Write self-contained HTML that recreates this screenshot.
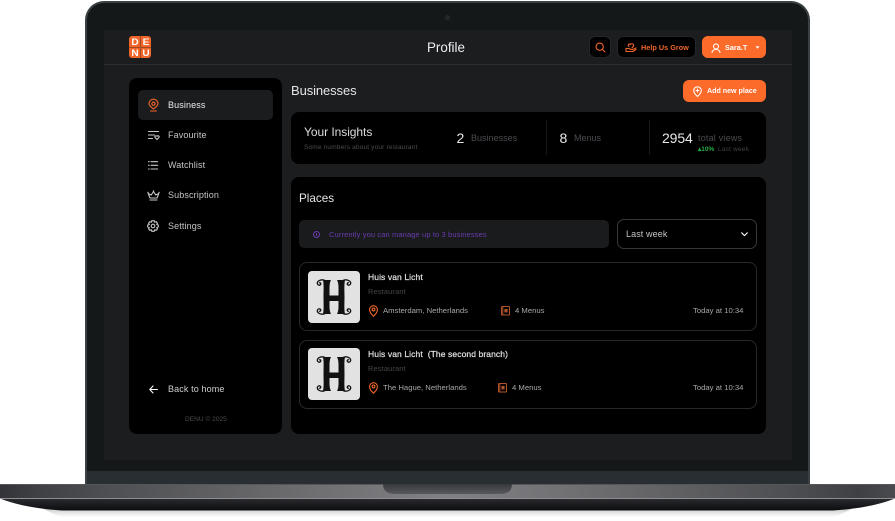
<!DOCTYPE html>
<html><head><meta charset="utf-8"><style>
*{box-sizing:border-box;margin:0;padding:0}
html,body{width:895px;height:521px;background:#fff;overflow:hidden}
body{position:relative;font-family:"Liberation Sans",sans-serif}
.a{position:absolute}
.t{position:absolute;white-space:nowrap;line-height:1}
svg{position:absolute;overflow:visible}
.nav{font-size:9px;color:#c4c4c4;letter-spacing:.12px}
.i{fill:none;stroke:#c8c8c8;stroke-width:1.1;stroke-linecap:round;stroke-linejoin:round}
.o{fill:none;stroke:#f0662a;stroke-width:1.1;stroke-linecap:round;stroke-linejoin:round}
.w{fill:none;stroke:#fff;stroke-width:1.1;stroke-linecap:round;stroke-linejoin:round}
.card{background:#000;border-radius:8px}
.row{left:299px;width:458px;height:69px;border:1px solid #26292c;border-radius:8px}
.thumb{left:308px;width:52px;height:52px;background:#e2e2e2;border-radius:4px}
.lg{position:absolute;font-size:9px;font-weight:700;color:#fff;line-height:1;width:10px;text-align:center;transform:scaleX(1.12)}
.sm{font-size:7.7px;color:#a8a8a8}
</style></head><body>
<!-- laptop lid -->
<div class="a" style="left:85px;top:1px;width:725px;height:484px;background:#3a4043;border-radius:19px 19px 0 0"></div>
<div class="a" style="left:87px;top:3px;width:721px;height:482px;background:#151819;border-radius:17px 17px 0 0"></div>
<div class="a" style="left:445px;top:15px;width:5px;height:5px;border-radius:50%;background:#23282b"></div>
<div class="a" style="left:87px;top:471px;width:721px;height:14px;background:#282e31"></div>
<!-- screen -->
<div class="a" style="left:104px;top:30px;width:688px;height:430px;background:#1c1d1f"></div>
<div class="a" style="left:104px;top:64px;width:688px;height:1px;background:#2b2f31"></div>
<!-- base -->
<div class="a" style="left:0;top:505px;width:895px;height:12px;background:linear-gradient(#b5b5b5,#fff);clip-path:polygon(35px 0,860px 0,835px 100%,60px 100%);filter:blur(1px)"></div>
<svg style="left:0;top:484px" width="895" height="27" viewBox="0 0 895 27">
<defs><linearGradient id="b" x1="0" x2="1" y1="0" y2="0">
<stop offset="0" stop-color="#333437"/><stop offset=".04" stop-color="#3f4043"/><stop offset=".12" stop-color="#4e4f52"/><stop offset=".3" stop-color="#68686b"/><stop offset=".5" stop-color="#818185"/><stop offset=".7" stop-color="#68686b"/><stop offset=".88" stop-color="#4e4f52"/><stop offset=".96" stop-color="#3f4043"/><stop offset="1" stop-color="#4a4b4e"/></linearGradient>
<linearGradient id="d" x1="0" x2="0" y1="0" y2="1"><stop offset="0" stop-color="#2a2b2f"/><stop offset="1" stop-color="#0c0d0f"/></linearGradient>
<linearGradient id="n" x1="0" x2="0" y1="0" y2="1"><stop offset="0" stop-color="#38393c"/><stop offset="1" stop-color="#58595c"/></linearGradient></defs>
<path d="M0 14.5Q24 24 62 26.5H833Q871 24 895 14.5Z" fill="url(#d)"/>
<rect x="0" y="0" width="895" height="14" fill="url(#b)"/>
<rect x="0" y="0" width="895" height="1" fill="#55575a"/>
<rect x="0" y="14" width="895" height="1" fill="#8a8a8e" opacity=".6"/>
<path d="M383 0H512Q512 10 500 10H395Q383 10 383 0Z" fill="url(#n)"/>
</svg>
<!-- header -->
<div class="a" style="left:129px;top:36px;width:22px;height:22px;background:#f0662a;border-radius:3px"></div>
<div class="a" style="left:129px;top:46.7px;width:22px;height:.6px;background:#a04a22"></div>
<div class="a" style="left:139.7px;top:36px;width:.6px;height:22px;background:#a04a22"></div>
<div class="lg" style="left:130px;top:38px">D</div><div class="lg" style="left:140.5px;top:38px">E</div>
<div class="lg" style="left:130px;top:48.5px">N</div><div class="lg" style="left:140.5px;top:48.5px">U</div>
<div class="t" style="left:427px;top:40.5px;font-size:13.4px;color:#ededed">Profile</div>
<div class="a" style="left:589px;top:36px;width:22px;height:22px;background:#000;border:1px solid #23262a;border-radius:6px"></div>
<svg style="left:595px;top:42px" width="11" height="11"><circle cx="4.7" cy="4.7" r="3.6" class="o"/><path d="M7.5 7.5L10 10" class="o"/></svg>
<div class="a" style="left:617px;top:36px;width:79px;height:22px;background:#000;border:1px solid #23262a;border-radius:6px"></div>
<svg style="left:625px;top:42px" width="12" height="11"><path d="M1 9.5V6.5H4L6 7.5H8L11 6M4 4.5C2.5 3 4 1 5.5 2.5C7 1 9 2 8.5 4L7 6" class="o"/><path d="M1 9.5H8L11 7.5" class="o"/></svg>
<div class="t" style="left:641px;top:43.5px;font-size:7.3px;font-weight:700;color:#f0662a">Help Us Grow</div>
<div class="a" style="left:702px;top:36px;width:64px;height:22px;background:#fd6b2b;border-radius:6px"></div>
<svg style="left:711px;top:42.5px" width="10" height="10"><circle cx="5" cy="3.4" r="2.5" class="w"/><path d="M1 9.5C1.5 5.5 8.5 5.5 9 9.5" class="w"/></svg>
<div class="t" style="left:725px;top:43.5px;font-size:7.3px;font-weight:700;color:#fff">Sara.T</div>
<svg style="left:755px;top:46px" width="5" height="3"><path d="M.5.3H4.5L2.5 2.7Z" fill="#fff"/></svg>
<!-- sidebar -->
<div class="a card" style="left:129px;top:78px;width:153px;height:356px"></div>
<div class="a" style="left:138px;top:90px;width:135px;height:30px;background:#1b1c1e;border-radius:5px"></div>
<svg style="left:148px;top:99px" width="11" height="13"><path d="M5.5 10C3 8 1 6.5 1 4.7A4.5 4.5 0 0 1 10 4.7C10 6.5 8 8 5.5 10Z" class="o"/><circle cx="5.5" cy="4.7" r="1.6" class="o"/><path d="M2.5 12H8.5" class="o"/></svg>
<div class="t nav" style="left:168px;top:101px;color:#ececec">Business</div>
<svg style="left:148px;top:131px" width="12" height="9"><path d="M.5 .5H10.5M.5 4H6.5M.5 7.5H4.5" class="i"/><path d="M9 8.5L7 6.5C6.2 5.2 8 4.2 9 5.3C10 4.2 11.8 5.2 11 6.5Z" class="i"/></svg>
<div class="t nav" style="left:168px;top:131px">Favourite</div>
<svg style="left:148px;top:161px" width="10" height="9"><path d="M.4 .7H1.2M3 .7H9.6M.4 4.3H1.2M3 4.3H9.6M.4 8H1.2M3 8H9.6" class="i"/></svg>
<div class="t nav" style="left:168px;top:161px">Watchlist</div>
<svg style="left:147px;top:190px" width="13" height="11"><path d="M3 8L1.2 3.5L4.3 5L6.5 1.5L8.7 5L11.8 3.5L10 8Z" class="i"/><path d="M3 10H10" class="i"/><circle cx="6.5" cy="1" r=".7" fill="#c8c8c8"/><circle cx="1" cy="2.5" r=".7" fill="#c8c8c8"/><circle cx="12" cy="2.5" r=".7" fill="#c8c8c8"/></svg>
<div class="t nav" style="left:168px;top:191px">Subscription</div>
<svg style="left:147px;top:220px" width="12" height="12"><circle cx="6" cy="6" r="1.8" class="i"/><path d="M4.8.7H7.2L7.6 2.2L9.1 1.6L10.5 3.2L9.6 4.5L11.3 5V7L9.7 7.6L10.5 8.9L9.1 10.4L7.6 9.8L7.2 11.3H4.8L4.4 9.8L2.9 10.4L1.5 8.9L2.3 7.6L.7 7V5L2.4 4.5L1.5 3.2L2.9 1.6L4.4 2.2Z" class="i"/></svg>
<div class="t nav" style="left:168px;top:221.5px">Settings</div>
<svg style="left:149px;top:385px" width="9" height="9"><path d="M8.5 4.5H.8M4 1L.8 4.5L4 8" class="w"/></svg>
<div class="t nav" style="left:168px;top:385px;color:#cfcfcf">Back to home</div>
<div class="t" style="left:185px;top:416.5px;font-size:6.5px;color:#4a4c50;letter-spacing:.05px">DENU © 2025</div>
<!-- top of main -->
<div class="t" style="left:291px;top:84px;font-size:13px;color:#e6e6e6;letter-spacing:-.1px">Businesses</div>
<div class="a" style="left:683px;top:80px;width:83px;height:22px;background:#fd6b2b;border-radius:6px"></div>
<svg style="left:693px;top:85.5px" width="9" height="11"><path d="M4.5 10.5C2.3 8.5.7 6.8.7 4.6A3.8 3.8 0 0 1 8.3 4.6C8.3 6.8 6.7 8.5 4.5 10.5Z" class="w"/><path d="M4.5 3V6M3 4.5H6" class="w"/></svg>
<div class="t" style="left:707px;top:87.5px;font-size:7.1px;font-weight:700;color:#fff">Add new place</div>
<!-- insights -->
<div class="a card" style="left:291px;top:112px;width:475px;height:52px"></div>
<div class="t" style="left:304px;top:126px;font-size:12px;color:#dcdcdc;letter-spacing:-.05px">Your Insights</div>
<div class="t" style="left:304px;top:144.5px;font-size:6.5px;color:#4a4c50;letter-spacing:.17px">Some numbers about your restaurant</div>
<div class="t" style="left:456.5px;top:131px;font-size:14px;color:#e8e8e8">2</div>
<div class="t" style="left:471px;top:133.5px;font-size:9px;color:#4a4c50;letter-spacing:.02px">Businesses</div>
<div class="a" style="left:546px;top:120px;width:1px;height:35px;background:#16181a"></div>
<div class="t" style="left:559.5px;top:131px;font-size:14px;color:#e8e8e8">8</div>
<div class="t" style="left:574px;top:133.5px;font-size:9px;color:#4a4c50">Menus</div>
<div class="a" style="left:649px;top:120px;width:1px;height:35px;background:#16181a"></div>
<div class="t" style="left:662px;top:131px;font-size:14px;color:#e8e8e8;letter-spacing:-.1px">2954</div>
<div class="t" style="left:698px;top:133.5px;font-size:9px;color:#4a4c50;letter-spacing:.2px">total views</div>
<div class="t" style="left:698px;top:146.5px;font-size:6.5px;font-weight:700;color:#26ad45">▴10%</div>
<div class="t" style="left:718px;top:146.5px;font-size:6.5px;color:#3f4144;letter-spacing:.2px">Last week</div>
<!-- places -->
<div class="a card" style="left:291px;top:177px;width:475px;height:257px"></div>
<div class="t" style="left:299px;top:192.5px;font-size:11.7px;color:#e6e6e6">Places</div>
<div class="a" style="left:299px;top:220px;width:310px;height:28px;background:#1a1b1d;border-radius:5px"></div>
<svg style="left:313px;top:231px" width="7" height="7"><circle cx="3.5" cy="3.5" r="3" fill="none" stroke="#6a3cae"/><path d="M3.5 2V5" stroke="#6a3cae"/></svg>
<div class="t" style="left:329px;top:230.5px;font-size:7.5px;color:#6a3cae;letter-spacing:.12px">Currently you can manage up to 3 businesses</div>
<div class="a" style="left:617px;top:219px;width:140px;height:30px;border:1px solid #34393c;border-radius:7px"></div>
<div class="t" style="left:626px;top:229.5px;font-size:9px;color:#c4c4c4;letter-spacing:.1px">Last week</div>
<svg style="left:741px;top:232px" width="7" height="5"><path d="M.7.8L3.5 3.6L6.3.8" class="w"/></svg>
<!-- row 1 -->
<div class="a row" style="top:262px"></div>
<div class="a thumb" style="top:271px"></div>
<svg style="left:308px;top:271px" width="52" height="52" viewBox="0 0 52 52"><path d="M17 9.5C14 8 12 9 10.5 10C8 12 10 15 12 14C13.500 13 12.500 11 11 12M35 9.500C38 8 40 9 41.500 10C44 12 42 15 40 14C38.500 13 39.500 11 41 12M17 42.500C14 44 12 43 10.500 42C8 40 10 37 12 38C13.500 39 12.500 41 11 40M35 42.500C38 44 40 43 41.500 42C44 40 42 37 40 38C38.500 39 39.500 41 41 40" fill="none" stroke="#111" stroke-width="1.3"/><path d="M15 9H23C22 11 21.500 13 21.500 17V24.500H30.500V17C30.500 13 30 11 29 9H37C36 14 36.500 20 36.500 26C36.500 32 36 38 37 43H29C30 41 30.500 39 30.500 35V30H21.500V35C21.500 39 22 41 23 43H15C16 38 15.500 32 15.500 26C15.500 20 16 14 15 9Z" fill="#111"/></svg>
<div class="t" style="left:368px;top:273px;font-size:8.5px;color:#e4e4e4;letter-spacing:.1px;-webkit-text-stroke:.2px #e4e4e4">Huis van Licht</div>
<div class="t" style="left:368px;top:288px;font-size:7.5px;color:#44464a;letter-spacing:.1px">Restaurant</div>
<svg style="left:369px;top:305px" width="9" height="12"><path d="M4.5 11.3C2.3 9 .6 7.2.6 4.6A3.9 3.9 0 0 1 8.4 4.6C8.4 7.2 6.7 9 4.5 11.3Z" class="o"/><circle cx="4.5" cy="4.5" r="1.4" class="o"/></svg>
<div class="t sm" style="left:383px;top:307px">Amsterdam, Netherlands</div>
<svg style="left:501px;top:306px" width="9" height="10"><rect x=".5" y=".5" width="8" height="8.5" rx=".8" fill="none" stroke="#b0532a"/><rect x="3.4" y="3" width="3.2" height="3.4" fill="#b0532a"/><path d="M1.8.5V9" stroke="#b0532a"/></svg>
<div class="t sm" style="left:515px;top:307px">4 Menus</div>
<div class="t sm" style="left:693px;top:307px">Today at 10:34</div>
<!-- row 2 -->
<div class="a row" style="top:340px"></div>
<div class="a thumb" style="top:348px"></div>
<svg style="left:308px;top:348px" width="52" height="52" viewBox="0 0 52 52"><path d="M17 9.5C14 8 12 9 10.5 10C8 12 10 15 12 14C13.500 13 12.500 11 11 12M35 9.500C38 8 40 9 41.500 10C44 12 42 15 40 14C38.500 13 39.500 11 41 12M17 42.500C14 44 12 43 10.500 42C8 40 10 37 12 38C13.500 39 12.500 41 11 40M35 42.500C38 44 40 43 41.500 42C44 40 42 37 40 38C38.500 39 39.500 41 41 40" fill="none" stroke="#111" stroke-width="1.3"/><path d="M15 9H23C22 11 21.500 13 21.500 17V24.500H30.500V17C30.500 13 30 11 29 9H37C36 14 36.500 20 36.500 26C36.500 32 36 38 37 43H29C30 41 30.500 39 30.500 35V30H21.500V35C21.500 39 22 41 23 43H15C16 38 15.500 32 15.500 26C15.500 20 16 14 15 9Z" fill="#111"/></svg>
<div class="t" style="left:368px;top:350px;font-size:8.5px;color:#e4e4e4;letter-spacing:.1px;-webkit-text-stroke:.2px #e4e4e4;white-space:pre">Huis van Licht  (The second branch)</div>
<div class="t" style="left:368px;top:365px;font-size:7.5px;color:#44464a;letter-spacing:.1px">Restaurant</div>
<svg style="left:369px;top:382px" width="9" height="12"><path d="M4.5 11.3C2.3 9 .6 7.2.6 4.6A3.9 3.9 0 0 1 8.4 4.6C8.4 7.2 6.7 9 4.5 11.3Z" class="o"/><circle cx="4.5" cy="4.5" r="1.4" class="o"/></svg>
<div class="t sm" style="left:383px;top:384px">The Hague, Netherlands</div>
<svg style="left:498px;top:383px" width="9" height="10"><rect x=".5" y=".5" width="8" height="8.5" rx=".8" fill="none" stroke="#b0532a"/><rect x="3.4" y="3" width="3.2" height="3.4" fill="#b0532a"/><path d="M1.8.5V9" stroke="#b0532a"/></svg>
<div class="t sm" style="left:512px;top:384px">4 Menus</div>
<div class="t sm" style="left:693px;top:384px">Today at 10:34</div>
</body></html>
